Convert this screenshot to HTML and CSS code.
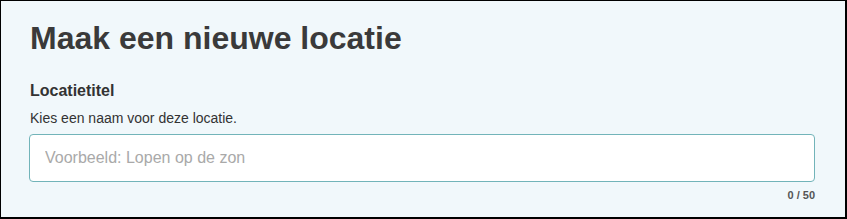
FILE: index.html
```html
<html><head>
<meta charset="utf-8">
<meta name="viewport" content="width=device-width, initial-scale=1">
<title>Nieuwe locatie</title>
<link rel="stylesheet" href="styles.css">
</head>
<body>
  <div class="panel">
    <h1 class="title">Maak een nieuwe locatie</h1>
    <div class="field">
      <label class="field-label" for="loc-title">Locatietitel</label>
      <div class="field-help">Kies een naam voor deze locatie.</div>
      <input type="text" id="loc-title" class="field-input" placeholder="Voorbeeld: Lopen op de zon" maxlength="50">
      <div class="field-count"><span id="count">0</span> / 50</div>
    </div>
  </div>

  <script>
    const input = document.getElementById('loc-title');
    input.addEventListener('input', () => {
      document.getElementById('count').textContent = input.value.length;
    });
  </script>
</body>
</html>
```

FILE: styles.css
```css
html, body {
  margin: 0;
  padding: 0;
  height: 100%;
}
body {
  font-family: 'Liberation Sans', Arial, sans-serif;
  color: #3a3a3a;
  box-sizing: border-box;
}
.panel {
  box-sizing: border-box;
  height: 219px;
  background-color: #f1f8fb;
  border: 1px solid #000;
  border-right-width: 2px;
  border-bottom-width: 2px;
  padding: 19px 30px 0 28px;
}
.title {
  margin: 0 0 0 1px;
  font-size: 32px;
  font-weight: bold;
  line-height: 37px;
  color: #3a3a3a;
}
.field {
  margin-top: 25px;
  display: flex;
  flex-direction: column;
}
.field-label {
  margin-left: 1px;
  font-size: 16px;
  font-weight: bold;
  line-height: 18px;
  color: #333;
}
.field-help {
  margin: 10px 0 0 1px;
  font-size: 14px;
  line-height: 16px;
  color: #333;
}
.field-input {
  box-sizing: border-box;
  margin-top: 8px;
  height: 48px;
  width: 100%;
  padding: 0 15px;
  border: 1px solid #72b4b9;
  border-radius: 4px;
  background-color: #fff;
  font-family: inherit;
  font-size: 16px;
  color: #333;
  outline: none;
}
.field-input::placeholder {
  color: #a9a9a9;
}
.field-count {
  margin-top: 7px;
  text-align: right;
  font-size: 11px;
  font-weight: bold;
  color: #555;
}
```
